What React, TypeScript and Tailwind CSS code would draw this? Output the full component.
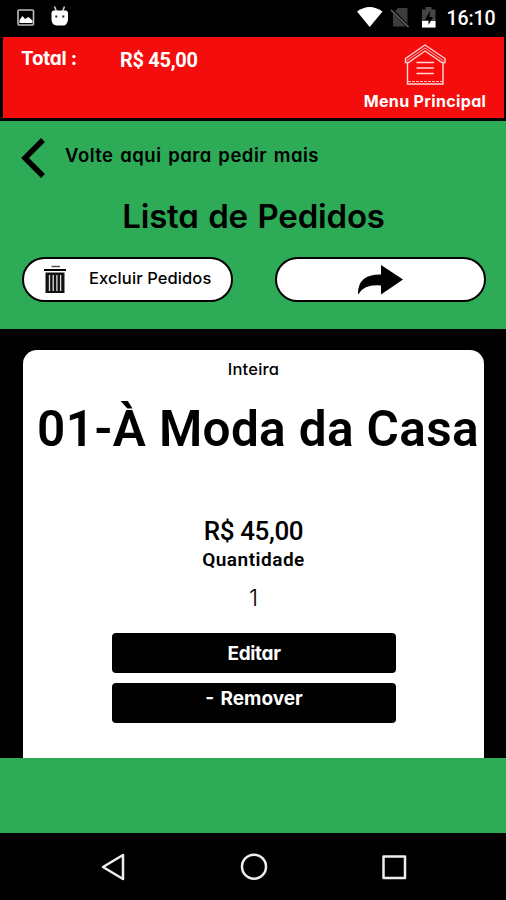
import React from "react";

const geo = "font-['Inter','Liberation_Sans',sans-serif] [font-feature-settings:'cv11'] whitespace-nowrap";
const roboto = "font-['Roboto','Liberation_Sans',sans-serif] whitespace-nowrap";

function StatusBar() {
  return (
    <div className="flex h-[37px] items-start justify-between bg-black pl-[17px] pr-[10px]">
      <div className="flex gap-[15px] pt-[6px]">
        <svg width="18" height="20" viewBox="0 0 18 20">
          <rect x="1" y="4" width="15.5" height="15" rx="1" fill="none" stroke="#bdbdbd" strokeWidth="1.6" />
          <path d="M2.5 17V14l3-4 2.5 3 3.5-2 4 3.500V17z" fill="#fff" />
        </svg>
        <svg width="20" height="21" viewBox="0 0 20 21">
          <path d="M4.500 .5l2 5M14.500 .5l-2 5" stroke="#ccc" strokeWidth="1.6" />
          <path d="M1.500 7Q1.500 4.500 4 4.500H16Q18 4.500 18 7V14Q17 19.500 13 19.500H6.500Q2 19 1.500 14z" fill="#fff" />
          <rect x="5.300" y="9.500" width="2" height="2" fill="#222" />
          <rect x="12.300" y="9.500" width="2" height="2" fill="#222" />
        </svg>
      </div>
      <div className="flex items-start">
        <svg className="mt-[6px]" width="140" height="24" viewBox="356 6 140 24">
          <path d="M357 11.500Q369.500 2.500 382.500 11.500L369.700 27z" fill="#fff" />
          <path d="M398 8H407.500V26.500H393V13z" fill="#3d3d3d" />
          <path d="M391 9L409 27.500" stroke="#000" strokeWidth="3" />
          <path d="M391 10L408.500 27" stroke="#686868" strokeWidth="1.500" />
          <path d="M425.500 7H431.500V9.500H435.500V27.500H422V9.500H425.500z" fill="#454545" />
          <path d="M422 21H435.500V27.500H422z" fill="#fff" />
          <path d="M430 11L425 20H428.500V25L433 17H429.500z" fill="#000" />
          <text x="446.500" y="24.700" fill="#fff" fontSize="19.500" fontWeight="500" textLength="49" fontFamily="Roboto, sans-serif">16:10</text>
        </svg>
      </div>
    </div>
  );
}

function Header() {
  return (
    <header className="h-[84px] bg-black pb-[3px] pl-[3px] pr-[2px]">
      <div className="flex h-[81px] bg-[#f50d0d] text-white">
        <span className={`ml-[18px] mt-[10px] w-[99px] text-[19px] font-bold leading-[24px] tracking-[-0.25px] ${geo}`}>Total :</span>
        <span className={`mt-[11px] text-[20px] font-bold leading-[24px] tracking-[-0.3px] ${roboto}`}>R$ 45,00</span>
        <div className="ml-auto mr-[17px] mt-[6px] flex w-[125px] flex-col items-center">
          <svg width="44" height="44" viewBox="0 0 44 44" fill="none" stroke="#ffd5d5" strokeWidth="1.400">
            <path d="M2.500 15.500L22 2l20 13.500v4h-3L22 8 5.500 19.500h-3z" />
            <path d="M4 17.500L22 5l18 12.500" strokeWidth="0.8" />
            <path d="M4.500 19.500V41H40V19.500" />
            <path d="M5 38.500H40" strokeDasharray="3 1" strokeWidth="0.900" />
            <path d="M13.500 19.500H31M13.500 25H31M13.500 30.500H31" strokeWidth="1.500" />
          </svg>
          <span className={`ml-px mt-[4px] text-[16px] font-bold leading-[20px] tracking-[0.35px] ${geo}`}>Menu Principal</span>
        </div>
      </div>
    </header>
  );
}

function Toolbar() {
  return (
    <section className="flex h-[208px] flex-col bg-[#2dab57] text-black">
      <div className="flex h-[67px] pl-[20px] pt-[16px]">
        <svg width="26" height="42" viewBox="0 0 26 42" fill="none">
          <path d="M23 3L5 21L23 39" stroke="#000" strokeWidth="5.500" />
        </svg>
        <span className={`ml-[19px] mt-[6px] text-[18.500px] font-semibold leading-[24px] tracking-[0.5px] [word-spacing:1.5px] ${geo}`}>Volte aqui para pedir mais</span>
      </div>
      <h1 className={`h-[69px] pl-px pt-[8px] text-center text-[33px] font-semibold leading-[40px] tracking-[-0.2px] [word-spacing:1.5px] ${geo}`}>Lista de Pedidos</h1>
      <div className="flex justify-between pl-[22px] pr-[20px]">
        <button className="flex h-[45px] w-[211px] items-center rounded-full border-2 border-black bg-white pl-[20px]">
          <svg width="24" height="30" viewBox="0 0 24 30">
            <path d="M7.500 1.500H16" stroke="#555" strokeWidth="1.500" />
            <path d="M0 5H22" stroke="#000" strokeWidth="2" />
            <path d="M1.500 7.500H20.500V28H1.500z" fill="#111" />
            <path d="M5.500 10V26M9.200 10V26M12.900 10V26M16.600 10V26" stroke="#ddd" strokeWidth="1.300" />
          </svg>
          <span className={`-mt-[4px] ml-[21px] text-[16.500px] font-medium leading-[22px] tracking-[0.1px] ${geo}`}>Excluir Pedidos</span>
        </button>
        <button className="flex h-[45px] w-[211px] items-center justify-center rounded-full border-2 border-black bg-white">
          <svg width="46" height="30" viewBox="0 0 46 30">
            <path d="M23 0L45 14.500L23 29.500V20.500Q6 19 0 29.500Q-.5 9 23 9.500z" fill="#000" />
          </svg>
        </button>
      </div>
    </section>
  );
}

function OrderCard() {
  return (
    <main className="h-[429px] bg-black pl-[23px] pr-[22px] pt-[21px]">
      <article className="flex h-[408px] flex-col items-center rounded-t-[14px] bg-white text-black">
        <span className={`mt-[8px] text-[16.500px] font-medium leading-[22px] tracking-[0.2px] ${geo}`}>Inteira</span>
        <h2 className={`ml-[9px] mt-[19px] h-[117px] text-[49.500px] font-semibold leading-[60px] tracking-[0.35px] ${roboto}`}>01-À Moda da Casa</h2>
        <span className={`text-[26px] font-medium leading-[30px] tracking-[-0.4px] ${roboto}`}>R$ 45,00</span>
        <span className={`mt-[2px] text-[19px] font-semibold leading-[24px] tracking-[0.5px] ${roboto}`}>Quantidade</span>
        <span className={`mt-[13px] text-[23px] font-light leading-[26px] ${geo}`}>1</span>
        <button className={`mt-[22px] h-[40px] w-[284px] shrink-0 rounded-[4px] bg-black pl-px text-[19px] font-bold leading-[41px] tracking-[-0.35px] text-white ${geo}`}>Editar</button>
        <button className={`mt-[10px] flex h-[40px] w-[284px] shrink-0 justify-center rounded-[4px] bg-black pl-px pt-[4px] text-[19px] font-bold leading-[24px] text-white [word-spacing:2px] ${geo}`}>- Remover</button>
      </article>
    </main>
  );
}

function NavigationBar() {
  return (
    <nav className="flex h-[67px] items-start justify-between bg-black pl-[99px] pr-[98px] pt-[20px]">
      <svg width="28" height="28" viewBox="0 0 28 28" fill="none" stroke="#eee" strokeWidth="2.500" strokeLinejoin="round">
        <path d="M24 2V26L4 14z" />
      </svg>
      <svg width="28" height="28" viewBox="0 0 28 28" fill="none" stroke="#eee" strokeWidth="2.500">
        <circle cx="14" cy="13.700" r="12" />
      </svg>
      <svg width="28" height="28" viewBox="0 0 28 28" fill="none" stroke="#eee" strokeWidth="2.500" strokeLinejoin="round">
        <rect x="3.500" y="3.500" width="21.500" height="21.500" />
      </svg>
    </nav>
  );
}

export default function App() {
  return (
    <div className="flex h-[900px] w-[506px] flex-col overflow-hidden bg-black">
      <StatusBar />
      <Header />
      <Toolbar />
      <OrderCard />
      <div className="h-[75px] bg-[#2dab57]" />
      <NavigationBar />
    </div>
  );
}
